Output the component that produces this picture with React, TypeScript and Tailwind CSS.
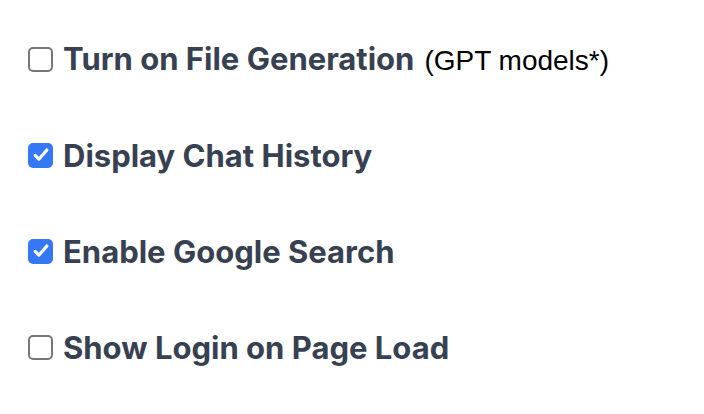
import React from 'react';

const Box = ({ checked }: { checked: boolean }) => {
    if (checked) {
        return (
            <span className="flex h-[25px] w-[25px] shrink-0 items-center justify-center rounded-[5px] bg-[#3478f6]">
                <svg viewBox="0 0 24 24" className="h-[20px] w-[20px]" fill="none" stroke="white" strokeWidth="3.8" strokeLinecap="round" strokeLinejoin="round">
                    <path d="M5 12.5l4.5 4.5L19 6" />
                </svg>
            </span>
        );
    }
    return <span className="h-[25px] w-[25px] shrink-0 rounded-[5px] border-[2px] border-[#767676] bg-white" />;
};

const settings = [
    { label: 'Turn on File Generation', note: '(GPT models*)', checked: false },
    { label: 'Display Chat History', checked: true },
    { label: 'Enable Google Search', checked: true },
    { label: 'Show Login on Page Load', checked: false },
];

export default function App() {
    return (
        <div className="h-[414px] w-[704px] bg-white pl-[28px] pt-[39px] font-['Inter',sans-serif]">
            <div className="flex flex-col gap-[56px]">
                {settings.map((s) => (
                    <label key={s.label} className="flex h-[40px] items-center gap-[10px]">
                        <Box checked={s.checked} />
                        <span className="flex items-baseline whitespace-nowrap text-[31px] font-bold leading-none text-[#374151]">
                            {s.label}
                            {s.note && (
                                <span className="ml-[10px] font-['Liberation_Sans',sans-serif] text-[28px] font-normal text-black">
                                    {s.note}
                                </span>
                            )}
                        </span>
                    </label>
                ))}
            </div>
        </div>
    );
}
